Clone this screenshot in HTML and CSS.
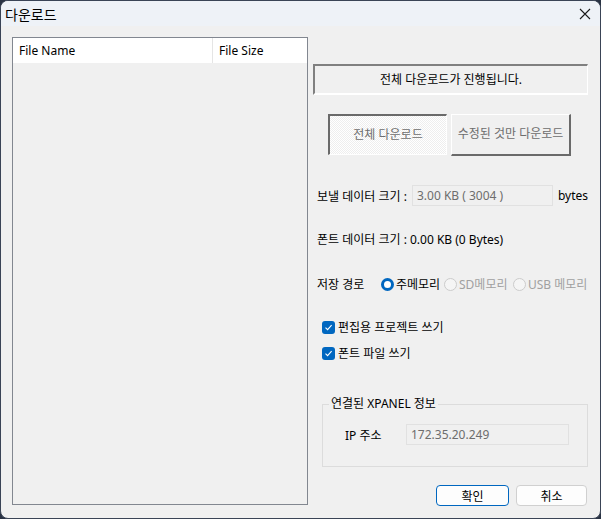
FILE: index.html
```html
<!DOCTYPE html>
<html>
<head>
    <title>다운로드</title>
    <link rel="stylesheet" href="styles.css">
</head>
<body>
    <div class="window">
        <div class="title-bar">
            <span class="title">다운로드</span>
            <span class="close-btn">
                <svg width="12" height="12" viewBox="0 0 12 12">
                    <path d="M1 1 L11 11 M11 1 L1 11" stroke="#1b1b1b" stroke-width="1.1" fill="none"/>
                </svg>
            </span>
        </div>

        <div class="content">
            <div class="file-list">
                <div class="list-head">
                    <div class="col-name">File Name</div>
                    <div class="col-size">File Size</div>
                </div>
            </div>

            <div class="panel">
                <div class="status-box">전체 다운로드가 진행됩니다.</div>

                <div class="mode-buttons">
                    <div class="mode-btn pressed">전체 다운로드</div>
                    <div class="mode-btn raised">수정된 것만 다운로드</div>
                </div>

                <div class="size-row">
                    <span class="size-label">보낼 데이터 크기 :</span>
                    <span class="read-box send-box">3.00 KB ( 3004 )</span>
                    <span class="unit">bytes</span>
                </div>

                <div class="font-row">폰트 데이터 크기 : 0.00 KB (0 Bytes)</div>

                <div class="path-row">
                    <span class="path-label">저장 경로</span>
                    <span class="radio-item item-main"><span class="radio on"></span>주메모리</span>
                    <span class="radio-item item-sd disabled"><span class="radio"></span>SD메모리</span>
                    <span class="radio-item disabled"><span class="radio"></span>USB 메모리</span>
                </div>

                <div class="check-row first">
                    <span class="check">
                        <svg width="9" height="9" viewBox="0 0 9 9"><path d="M1.5 4.6 L3.6 6.6 L7.6 2.2" stroke="#fff" stroke-width="1.1" fill="none"/></svg>
                    </span>
                    편집용 프로젝트 쓰기
                </div>
                <div class="check-row">
                    <span class="check">
                        <svg width="9" height="9" viewBox="0 0 9 9"><path d="M1.5 4.6 L3.6 6.6 L7.6 2.2" stroke="#fff" stroke-width="1.1" fill="none"/></svg>
                    </span>
                    폰트 파일 쓰기
                </div>

                <fieldset class="panel-group">
                    <legend>연결된 XPANEL 정보</legend>
                    <div class="ip-row">
                        <span class="ip-label">IP 주소</span>
                        <span class="read-box ip-box">172.35.20.249</span>
                    </div>
                </fieldset>

                <div class="dialog-buttons">
                    <button class="dlg-btn default">확인</button>
                    <button class="dlg-btn">취소</button>
                </div>
            </div>
        </div>
    </div>
</body>
</html>
```

FILE: styles.css
```css
body {
    margin: 0;
    padding: 0;
    background-color: #2a3344;
    font-family: "Noto Sans", "Noto Sans CJK KR", sans-serif;
    font-size: 12px;
    color: #000;
}

.window {
    box-sizing: border-box;
    width: 601px;
    height: 519px;
    border: 1px solid #3a4456;
    border-radius: 8px;
    background-color: #f0f0f0;
    overflow: hidden;
}

/* title bar */
.title-bar {
    height: 25px;
    background-color: #eef2f7;
    display: flex;
    align-items: center;
    justify-content: space-between;
}

.title {
    margin-left: 4px;
    font-size: 14px;
    line-height: 18px;
    font-family: "Noto Sans CJK KR", sans-serif;
}

.close-btn {
    display: flex;
    margin-right: 9px;
}

.content {
    display: flex;
    padding: 11px 0 0 11px;
}

/* file list on the left */
.file-list {
    box-sizing: border-box;
    width: 296px;
    height: 468px;
    border: 1px solid #828790;
    background-color: #f0f0f0;
}

.list-head {
    display: flex;
    height: 25px;
    background-color: #fff;
}

.list-head div {
    line-height: 25px;
    padding-left: 6px;
}

.col-name {
    width: 193px;
    border-right: 1px solid #e5e5e5;
}

.col-size {
    flex: 1;
}

/* right panel */
.panel {
    width: 275px;
    margin-left: 5px;
    display: flex;
    flex-direction: column;
}

.status-box {
    box-sizing: border-box;
    margin-top: 27px;
    height: 31px;
    border-top: 2px solid #808080;
    border-left: 2px solid #808080;
    border-right: 1px solid #fff;
    border-bottom: 2px solid #fff;
    text-align: center;
    line-height: 27px;
}

.mode-buttons {
    display: flex;
    margin-top: 19px;
    padding-left: 15px;
    gap: 4px;
}

.mode-btn {
    box-sizing: border-box;
    width: 120px;
    height: 42px;
    color: #6d6d6d;
    text-align: center;
    line-height: 38px;
}

.mode-btn.pressed {
    width: 119px;
    height: 41px;
    border-top: 2px solid #6a6a6a;
    border-left: 2px solid #6a6a6a;
    border-right: 1px solid #fff;
    border-bottom: 1px solid #fff;
    background-color: #f6f6f6;
    background-image: repeating-conic-gradient(#ffffff 0 25%, #eeeeee 0 50%);
    background-size: 2px 2px;
}

.mode-btn.raised {
    border-top: 1px solid #fff;
    border-left: 1px solid #fff;
    border-right: 2px solid #6a6a6a;
    border-bottom: 2px solid #6a6a6a;
    background-color: #f0f0f0;
}

.size-row {
    display: flex;
    align-items: center;
    margin-top: 29px;
    padding-left: 4px;
}

.size-label {
    width: 95px;
}

.read-box {
    box-sizing: border-box;
    height: 21px;
    line-height: 19px;
    border: 1px solid #e1e1e1;
    color: #6d6d6d;
    padding-left: 4px;
}

.send-box {
    width: 141px;
}

.unit {
    margin-left: 5px;
}

.font-row {
    margin-top: 24px;
    padding-left: 4px;
    line-height: 20px;
}

.path-row {
    display: flex;
    align-items: center;
    margin-top: 24px;
    padding-left: 4px;
    height: 20px;
}

.path-label {
    width: 64px;
}

.radio-item {
    display: flex;
    align-items: center;
    gap: 2px;
}

.item-main {
    width: 63px;
}

.item-sd {
    width: 69px;
}

.radio-item.disabled {
    color: #a0a0a0;
}

.radio {
    box-sizing: border-box;
    width: 13px;
    height: 13px;
    border-radius: 50%;
    border: 1px solid #cccccc;
    background-color: #f5f5f5;
}

.radio.on {
    border: 3.5px solid #0067c0;
    background-color: #fff;
}

.check-row {
    display: flex;
    align-items: center;
    gap: 3px;
    padding-left: 9px;
    height: 18px;
    margin-top: 8px;
}

.check-row.first {
    margin-top: 24px;
}

.check {
    width: 13px;
    height: 13px;
    border-radius: 3px;
    background-color: #0067c0;
    display: flex;
    align-items: center;
    justify-content: center;
}

/* group box */
.panel-group {
    box-sizing: border-box;
    margin: 34px 0 0 9px;
    padding: 12px 0 0 0;
    height: 71px;
    border: 1px solid #dcdcdc;
}

.panel-group legend {
    padding: 0 2px;
    margin-left: 6px;
    line-height: 16px;
}

.ip-row {
    display: flex;
    align-items: center;
    padding-left: 22px;
}

.ip-label {
    width: 61px;
}

.ip-box {
    width: 163px;
}

.dialog-buttons {
    display: flex;
    justify-content: flex-end;
    gap: 7px;
    margin-top: 18px;
    padding-right: 1px;
}

.dlg-btn {
    box-sizing: border-box;
    height: 21px;
    width: 71px;
    border: 1px solid #d0d0d0;
    border-radius: 4px;
    background-color: #fdfdfd;
    font-family: "Noto Sans", "Noto Sans CJK KR", sans-serif;
    font-size: 12px;
    padding: 0;
}

.dlg-btn.default {
    width: 73px;
    border: 1px solid #0067c0;
}
```
